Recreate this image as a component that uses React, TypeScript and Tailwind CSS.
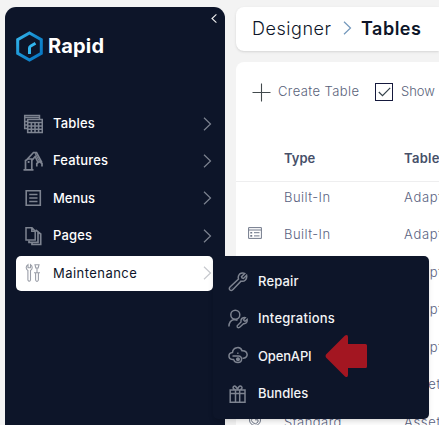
import type { ReactNode } from 'react';

type IconProps = { className?: string };

function Svg({ className = '', w = 20, h = 20, children }: IconProps & { w?: number; h?: number; children: ReactNode }) {
  return (
    <svg className={`shrink-0 ${className}`} width={w} height={h} viewBox={`0 0 ${w} ${h}`} fill="none" stroke="currentColor" strokeWidth="1.2">
      {children}
    </svg>
  );
}

const TablesIcon = () => (
  <Svg>
    <path d="M4 14.500H1.700V1.500H16.500V5M1.500 3.500H16.500M1.500 7.500H4M1.500 11H4" strokeWidth="1.500" />
    <path d="M4.700 5.500H19.300V18.500H4.700ZM4.700 8.500H19.300M4.700 12H19.300M4.700 15.300H19.300M8.400 9V18.500M12 9V18.500M15.600 9V18.500" strokeWidth="1.600" />
  </Svg>
);

const FeaturesIcon = () => (
  <Svg>
    <path d="M.5 18.800H10.500M2.500 18.500V9.500L5 8H8.800V18.500M3 9.500L10.500 1.500H13.500L18.800 11.500M8.800 9.500L12.200 5.500L15 11.500M13.800 15.500V12.500L16.500 10.500L19 12.500V15.500" strokeWidth="1.700" />
    <path d="M5.600 10V12" strokeWidth="1.800" />
    <path d="M12 2L16.500 10.500" strokeWidth="1.200" />
  </Svg>
);

const MenusIcon = () => (
  <Svg>
    <path d="M3.200 2.700H17.300V17.300H3.200Z" strokeWidth="1.600" />
    <path d="M6.200 6.500H14.500M6.200 10H14.500M6.200 13.500H14.500" strokeWidth="1.500" />
  </Svg>
);

const PagesIcon = () => (
  <Svg>
    <path d="M3 1.700H9L12.200 5V14H3ZM8.800 1.700V5.300H12.200" strokeWidth="1.500" />
    <path d="M6 14.500V16.300H15V5.800L12.500 4M9 17V18.500H17.700V8L15 6" strokeWidth="1.700" />
  </Svg>
);

const MaintenanceIcon = () => (
  <Svg>
    <path d="M5 1.600C2.400 3.300 2.800 6.300 4.900 7.400V17Q6.200 19.500 7.500 17V7.400C9.600 6.300 10 3.300 7.500 1.600V4.700H5Z" strokeWidth="1.100" />
    <path d="M12 1.700H16L15.200 5H12.800ZM14 5V9.500M11 9.700H17M12.600 10V17Q14 20 15.400 17V10" strokeWidth="1.100" />
  </Svg>
);

const RepairIcon = () => (
  <Svg>
    <path d="M11.500 2.200C13 1 15 .7 16.700 1.400L13.500 4.700L14 6L15.400 6.500L18.600 3.300C19.400 7 16.500 10 13 9.200L5 17.600C3 20 0 17 2 15L10.500 7C10 5.200 10.200 3.500 11.500 2.200Z" strokeWidth="1.500" />
    <path d="M3.800 15.800L4.200 16.200" />
  </Svg>
);

const IntegrationsIcon = () => (
  <Svg>
    <circle cx="7.300" cy="5.800" r="4.500" strokeWidth="1.500" />
    <path d="M.9 17.500C1 13.500 3 11.200 6 10.500L9.500 11.300" strokeWidth="1.500" />
    <path d="M13 11Q14 8.300 17.300 8.600L15.500 10.900L17 12.400L19.200 10.500C19.500 13.500 17.800 15 15.500 14.700L11.500 18.400Q9 19.500 9.200 16.800L13 13Z" strokeWidth="1.400" />
  </Svg>
);

const OpenApiIcon = () => (
  <Svg>
    <path d="M6 13.500H4.500C-.2 13-.2 7 4.500 6.500C5 .8 12.500 0 14 4.700C20 4.300 21 11.700 15.500 12.200H14.500" strokeWidth="1.500" />
    <path d="M4.500 10H10.500C14.700 10 14.700 16.500 10 16.500C7.500 16.500 6 15.300 6 13.500M9.200 7.300H10.500M8.200 13.200H10.500" strokeWidth="1.500" />
    <circle cx="10" cy="13.200" r="1.400" fill="currentColor" />
  </Svg>
);

const BundlesIcon = () => (
  <Svg>
    <path d="M2.200 6H17V18.300H2.200ZM2.200 9.500H17M7.500 6V18M11.700 6V18M8 6C3.500 5 5 1.300 7.200 2.200Q9 3 9.600 6C10 3 11.500 1.500 13 2.200C15 3.500 14 5.500 11.200 6" strokeWidth="1.500" />
  </Svg>
);

const ListIcon = () => (
  <Svg w={14} h={12}>
    <path d="M.6 .6H13.400V11.400H.6ZM.6 3H13.400M6 5.700H11.500M6 8.900H11.500" strokeWidth="1" />
    <path d="M2.300 5.700H4.200M2.300 8.900H4.200" strokeWidth="1.600" />
  </Svg>
);

const SpiralIcon = () => (
  <Svg w={14} h={14}>
    <circle cx="7" cy="7" r="5.500" strokeWidth="1" />
    <path d="M9.500 4.500A3.500 3.500 0 1 0 10 9V6.800H7" strokeWidth="1" />
  </Svg>
);

function Chevron({ className = '' }: IconProps) {
  return (
    <Svg w={9} h={14} className={className}>
      <path d="M1 .7L7.500 7L1 13.300" strokeWidth="1.200" />
    </Svg>
  );
}

function Logo() {
  return (
    <svg className="shrink-0" width="27" height="31" viewBox="0 0 27 31" fill="none">
      <defs>
        <linearGradient id="hex" x1="0" y1="5" x2="27" y2="23" gradientUnits="userSpaceOnUse">
          <stop stopColor="#36b8ee" />
          <stop offset=".5" stopColor="#168dd0" />
          <stop offset="1" stopColor="#0878c4" />
        </linearGradient>
      </defs>
      <path d="M13.500 2L25.300 8.700V22.300L13.500 29L1.700 22.300V8.700Z" stroke="url(#hex)" strokeWidth="3" />
      <path d="M13.500 23V17Q13.500 15.700 14.800 15L19.500 12.300" stroke="#32b5ee" strokeWidth="3" />
    </svg>
  );
}

const navItems = [
  { label: 'Tables', icon: <TablesIcon />, track: 'tracking-[0.200px]' },
  { label: 'Features', icon: <FeaturesIcon />, track: 'tracking-[0.150px]' },
  { label: 'Menus', icon: <MenusIcon />, track: 'tracking-[-0.050px]' },
  { label: 'Pages', icon: <PagesIcon />, track: 'tracking-[0.150px]' },
];

const subItems = [
  { label: 'Repair', icon: <RepairIcon />, track: 'tracking-[0.150px]' },
  { label: 'Integrations', icon: <IntegrationsIcon />, track: 'tracking-[0.250px]' },
  { label: 'OpenAPI', icon: <OpenApiIcon />, track: 'tracking-[-0.150px]' },
  { label: 'Bundles', icon: <BundlesIcon />, track: 'tracking-[0px]' },
];

const rows: { type: string; table: string; icon?: ReactNode }[] = [
  { type: 'Built-In', table: 'Adapt' },
  { type: 'Built-In', table: 'Adapt', icon: <ListIcon /> },
  { type: 'Built-In', table: 'Adapt' },
  { type: 'Built-In', table: 'Adapt' },
  { type: 'Built-In', table: 'Adapt' },
  { type: 'Standard', table: 'Asset' },
  { type: 'Standard', table: 'Asset', icon: <SpiralIcon /> },
];

function Sidebar() {
  return (
    <aside className="flex h-[418px] w-[220px] shrink-0 flex-col rounded-t-[11px] bg-[#0d1529] text-white">
      <div className="flex h-[23px] justify-end pt-[7px] pr-[8px]">
        <svg width="6" height="9" viewBox="0 0 6 9" fill="none" stroke="#eee" strokeWidth="1.100">
          <path d="M5.400 .4L1 4.500L5.400 8.600" />
        </svg>
      </div>
      <div className="flex h-[32px] items-center pl-[11px]">
        <Logo />
        <span className="ml-[5px] text-[20px] font-bold tracking-[0.200px]">Rapid</span>
      </div>
      <nav className="mt-[43px] flex flex-col">
        {navItems.map((item) => (
          <div key={item.label} className="flex h-[37.400px] items-center pr-[13px] pl-[18px] text-[#7d8390]">
            {item.icon}
            <span className={`ml-[10px] flex-1 text-[13px] font-medium text-white ${item.track}`}>{item.label}</span>
            <Chevron />
          </div>
        ))}
        <div className="mt-[1.400px] mr-[12px] ml-[11px] flex h-[35px] items-center rounded-[5px] bg-white pl-[7px] text-[#9a9ea8]">
          <MaintenanceIcon />
          <span className="ml-[10px] flex-1 text-[13px] tracking-[0.450px] text-[#0d1529]">Maintenance</span>
          <Chevron className="mr-px text-[#c7c9ce]" />
        </div>
      </nav>
    </aside>
  );
}

function Submenu() {
  return (
    <div className="absolute top-[256px] left-[213px] flex h-[163px] w-[216px] flex-col rounded-r-[5px] rounded-bl-[5px] bg-[#0d1529] pt-[7px] shadow-md">
      {subItems.map((item) => (
        <div key={item.label} className="flex h-[37.400px] items-center pl-[15px] text-[#7d8390]">
          {item.icon}
          <span className={`ml-[10px] text-[13px] font-medium text-[#f3f4f6] ${item.track}`}>{item.label}</span>
        </div>
      ))}
      <svg className="absolute top-[78px] left-[112px]" width="43" height="44" viewBox="0 0 43 44">
        <path d="M1 20.500Q0 22 1 23.500L20 42.500Q23 44 23 41V34H40.500Q42 34 42 32.500V11.500Q42 10 40.500 10H23V3Q23 0 20 1.500Z" fill="#a31621" />
      </svg>
    </div>
  );
}

export default function App() {
  return (
    <div className="relative flex h-[425px] w-[439px] overflow-hidden bg-[#f3f3f3] pt-[7px] pl-[5px] font-['Inter',sans-serif]">
      <Sidebar />
      <main className="ml-[11px] flex min-w-0 flex-1 flex-col">
        <header className="flex h-[44px] shrink-0 items-center rounded-l-[8px] bg-white pb-[2px] pl-[16px] text-[#0d1529] shadow-sm">
          <span className="w-[91px] text-[18px] font-light tracking-[0.550px]">Designer</span>
          <Chevron className="text-[#7297bb]" />
          <span className="ml-[9px] text-[18px] font-semibold tracking-[0.500px]">Tables</span>
        </header>
        <section className="mt-[11px] flex flex-1 flex-col overflow-hidden rounded-tl-[8px] bg-white">
          <div className="flex h-[60px] shrink-0 items-center pl-[16px] text-[13px] whitespace-nowrap text-[#59627a]">
            <svg width="19" height="19" viewBox="0 0 19 19" stroke="#424a4d" strokeWidth="1.100">
              <path d="M9.500 .5V18.500M.5 9.500H18.500" />
            </svg>
            <span className="ml-[7px] w-[97px] font-light tracking-[0.400px]">Create Table</span>
            <span className="flex h-[18px] w-[18px] shrink-0 items-center justify-center border border-[#15193d]">
              <svg width="13" height="10" viewBox="0 0 13 10" fill="none" stroke="#34404a" strokeWidth="1.200">
                <path d="M.8 5L4.500 8.700L12.200 .8" />
              </svg>
            </span>
            <span className="ml-[8px] font-light">Show</span>
          </div>
          <div className="mt-[15px] flex h-[45px] shrink-0 items-center border-b border-[#eeeeef] pl-[48px] text-[13px] font-semibold text-[#465069]">
            <span className="w-[120px] shrink-0">Type</span>
            <span className="tracking-[0.300px] whitespace-nowrap">Tables</span>
          </div>
          <div className="-mt-[3.500px] flex shrink-0 flex-col">
            {rows.map((row, i) => (
              <div key={i} className="flex h-[37.500px] items-center text-[13px] font-light text-[#59627f]">
                <span className="flex w-[48px] shrink-0 items-center pb-[4px] pl-[12px] text-[#71798a]">{row.icon}</span>
                <span className="w-[120px] shrink-0 tracking-[0.450px]">{row.type}</span>
                <span className="tracking-[0.700px]">{row.table}</span>
              </div>
            ))}
          </div>
        </section>
      </main>
      <Submenu />
    </div>
  );
}
